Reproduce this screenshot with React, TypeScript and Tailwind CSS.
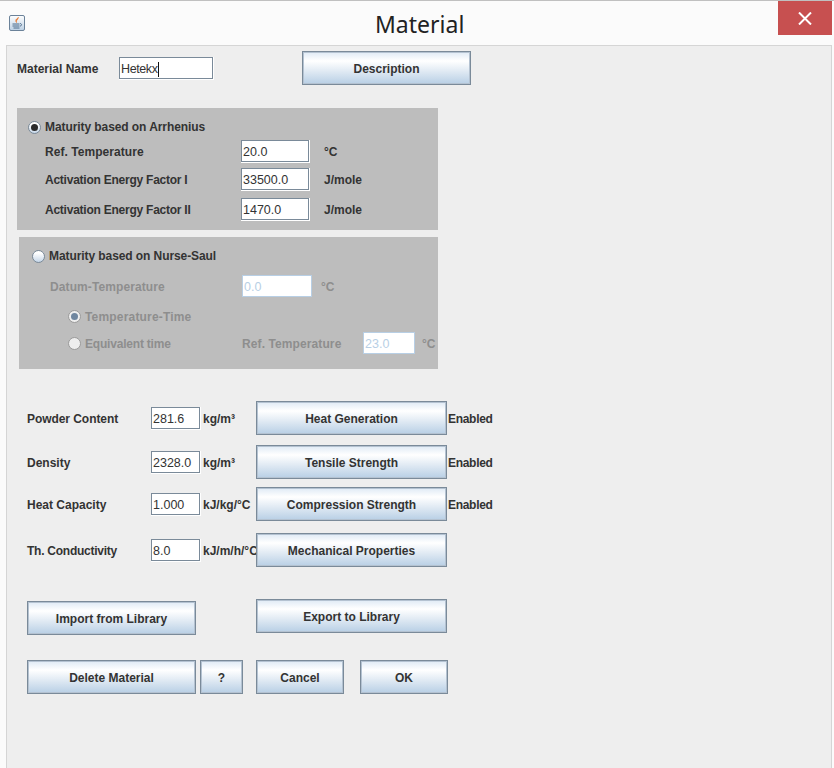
import type { ReactNode } from "react";

const btnClass =
  "h-[34px] shrink-0 border border-[#7a8a99] bg-[linear-gradient(180deg,#dfeaf5_0%,#ffffff_28%,#e2ebf4_58%,#b8cfe5_100%)] pt-[2px] text-xs font-bold text-[#333333] shadow-[inset_0_0_0_1px_#b4c2d1]";

const JavaIcon = () => (
  <svg width="16" height="16" viewBox="0 0 16 16" className="shrink-0">
    <defs>
      <linearGradient id="cup" x1="0" y1="0" x2="0" y2="1">
        <stop offset="0" stopColor="#ffffff" />
        <stop offset="1" stopColor="#bcd0e4" />
      </linearGradient>
    </defs>
    <rect x="0.5" y="0.5" width="15" height="15" rx="1.5" fill="url(#cup)" stroke="#6b8299" />
    <path d="M9.5 2.5C7 4 6 5.5 7.5 7.5C6.8 5.5 8.5 5 9.5 2.5Z" fill="#e8772e" stroke="#e8772e" strokeWidth="0.7" />
    <path d="M3.5 9h7M3.5 11h7M4.5 13h6" stroke="#4a6a8a" strokeWidth="1" />
    <path d="M11 8.5c2 0 2 2.5 0 2.5" fill="none" stroke="#4a6a8a" strokeWidth="1" />
  </svg>
);

const Radio = ({ on, disabled }: { on?: boolean; disabled?: boolean }) => (
  <span
    className={
      disabled
        ? "flex h-[13px] w-[13px] shrink-0 items-center justify-center rounded-full border border-[#9a9a9a] bg-[#eeeeee]"
        : "flex h-[13px] w-[13px] shrink-0 items-center justify-center rounded-full border border-[#7a8a99] bg-[linear-gradient(180deg,#ffffff_20%,#c5d6e8_100%)]"
    }
  >
    {on && (
      <span
        className={
          disabled
            ? "h-[7px] w-[7px] rounded-full bg-[#6f869f]"
            : "h-[7px] w-[7px] rounded-full bg-[#2b2b2b]"
        }
      />
    )}
  </span>
);

const Field = ({
  value,
  className,
  disabled,
}: {
  value: ReactNode;
  className: string;
  disabled?: boolean;
}) => (
  <div
    className={`flex shrink-0 items-center bg-white pt-[2px] pl-[2px] text-[12.5px] ${
      disabled
        ? "text-[#b8cfe5] shadow-[inset_0_0_0_1px_#b8cfe5]"
        : "text-[#333333] shadow-[inset_-1px_-1px_0_#ffffff,inset_-2px_-2px_0_#7a8a99,inset_1px_1px_0_#7a8a99]"
    } ${className}`}
  >
    {value}
  </div>
);

const properties = [
  { label: "Powder Content", value: "281.6", unit: "kg/m³", button: "Heat Generation", status: "Enabled", mt: "mt-[32px]", track: "tracking-[-0.06px]" },
  { label: "Density", value: "2328.0", unit: "kg/m³", button: "Tensile Strength", status: "Enabled", mt: "mt-[10px]", track: "" },
  { label: "Heat Capacity", value: "1.000", unit: "kJ/kg/°C", button: "Compression Strength", status: "Enabled", mt: "mt-[8px]", track: "" },
  { label: "Th. Conductivity", value: "8.0", unit: "kJ/m/h/°C", button: "Mechanical Properties", status: "", mt: "mt-[12px]", track: "tracking-[-0.25px]" },
];

const arrhenius = [
  { label: "Ref. Temperature", value: "20.0", unit: "°C", mt: "mt-[6px]", track: "tracking-[0.05px]" },
  { label: "Activation Energy Factor I", value: "33500.0", unit: "J/mole", mt: "mt-[6px]", track: "tracking-[-0.24px]" },
  { label: "Activation Energy Factor II", value: "1470.0", unit: "J/mole", mt: "mt-[8px]", track: "tracking-[-0.24px]" },
];

export default function App() {
  return (
    <div className="flex h-[768px] w-[834px] flex-col overflow-hidden border-t border-[#c0c0c0] bg-[#fbfbfb] font-['Liberation_Sans',Arial,sans-serif] text-xs font-bold text-[#333333]">
      <header className="flex h-[44px] shrink-0 items-start">
        <div className="mt-[14px] ml-[9px]">
          <JavaIcon />
        </div>
        <h1 className="mt-[6px] ml-[350px] font-['Noto_Sans',sans-serif] text-[23px] leading-[34px] font-normal text-[#222222]">
          Material
        </h1>
        <button className="mr-[2px] ml-auto flex h-[34px] w-[54px] items-center justify-center bg-[#c75050]">
          <svg width="14" height="13" viewBox="0 0 14 13">
            <path d="M1 0.5L13 12.5M13 0.5L1 12.5" stroke="#ffffff" strokeWidth="2" />
          </svg>
        </button>
      </header>

      <main className="mr-[2px] ml-[6px] flex-1 border-x border-t border-[#d5d5d5] bg-[#eeeeee] pt-[5px] pl-[10px]">
        <div className="flex h-[34px] items-center">
          <span className="w-[102px] pt-[2px]">Material Name</span>
          <Field
            className="h-[23px] w-[95px]"
            value={<span className="border-r border-[#111111] leading-[15px] font-normal tracking-[-0.4px]">Hetekx</span>}
          />
          <button className={`${btnClass} ml-[88px] w-[169px]`}>Description</button>
        </div>

        <section className="mt-[23px] h-[122px] w-[421px] bg-[#bdbdbd] pt-[12px] pl-[11px]">
          <div className="flex h-[14px] items-center gap-[4px]">
            <Radio on />
            <span className="tracking-[-0.08px]">Maturity based on Arrhenius</span>
          </div>
          {arrhenius.map((row) => (
            <div key={row.label} className={`flex h-[22px] items-center pl-[17px] ${row.mt}`}>
              <span className={`w-[196px] pt-[2px] ${row.track}`}>{row.label}</span>
              <Field className="h-[23px] w-[69px] font-normal" value={row.value} />
              <span className="ml-[14px] pt-[2px]">{row.unit}</span>
            </div>
          ))}
        </section>

        <section className="mt-[7px] ml-[2px] h-[132px] w-[419px] bg-[#bdbdbd] pt-[12px] pl-[13px] text-[#8e8e8e]">
          <div className="flex h-[14px] items-center gap-[4px] text-[#333333]">
            <Radio />
            <span className="tracking-[-0.08px]">Maturity based on Nurse-Saul</span>
          </div>
          <div className="mt-[12px] flex h-[22px] items-center pl-[18px]">
            <span className="w-[192px] pt-[2px] tracking-[0.1px]">Datum-Temperature</span>
            <Field disabled className="h-[22px] w-[70px] font-normal" value="0.0" />
            <span className="ml-[9px] pt-[2px]">°C</span>
          </div>
          <div className="mt-[12px] flex h-[14px] items-center gap-[4px] pl-[36px]">
            <Radio on disabled />
            <span className="pt-[2px] tracking-[0.18px]">Temperature-Time</span>
          </div>
          <div className="mt-[9px] flex h-[22px] items-center pl-[36px]">
            <Radio disabled />
            <span className="ml-[4px] w-[157px] pt-[2px] tracking-[-0.2px]">Equivalent time</span>
            <span className="w-[121px] pt-[2px] tracking-[0.1px]">Ref. Temperature</span>
            <Field disabled className="h-[22px] w-[52px] font-normal" value="23.0" />
            <span className="ml-[7px] pt-[2px]">°C</span>
          </div>
        </section>

        {properties.map((row) => (
          <div key={row.label} className={`flex h-[34px] items-center pl-[10px] ${row.mt}`}>
            <span className={`w-[124px] shrink-0 pt-[2px] ${row.track}`}>{row.label}</span>
            <Field className="h-[23px] w-[50px] font-normal" value={row.value} />
            <span className="ml-[2px] w-[53px] shrink-0 pt-[2px] whitespace-nowrap">{row.unit}</span>
            <button className={`${btnClass} w-[191px]`}>{row.button}</button>
            <span className="ml-[1px] pt-[2px] tracking-[-0.3px]">{row.status}</span>
          </div>
        ))}

        <div className="mt-[32px] flex items-start pl-[10px]">
          <button className={`${btnClass} mt-[2px] w-[169px]`}>Import from Library</button>
          <button className={`${btnClass} ml-[60px] w-[191px]`}>Export to Library</button>
        </div>

        <div className="mt-[25px] flex pl-[10px]">
          <button className={`${btnClass} w-[169px]`}>Delete Material</button>
          <button className={`${btnClass} ml-[4px] w-[43px]`}>?</button>
          <button className={`${btnClass} ml-[13px] w-[88px]`}>Cancel</button>
          <button className={`${btnClass} ml-[16px] w-[88px]`}>OK</button>
        </div>
      </main>
    </div>
  );
}
